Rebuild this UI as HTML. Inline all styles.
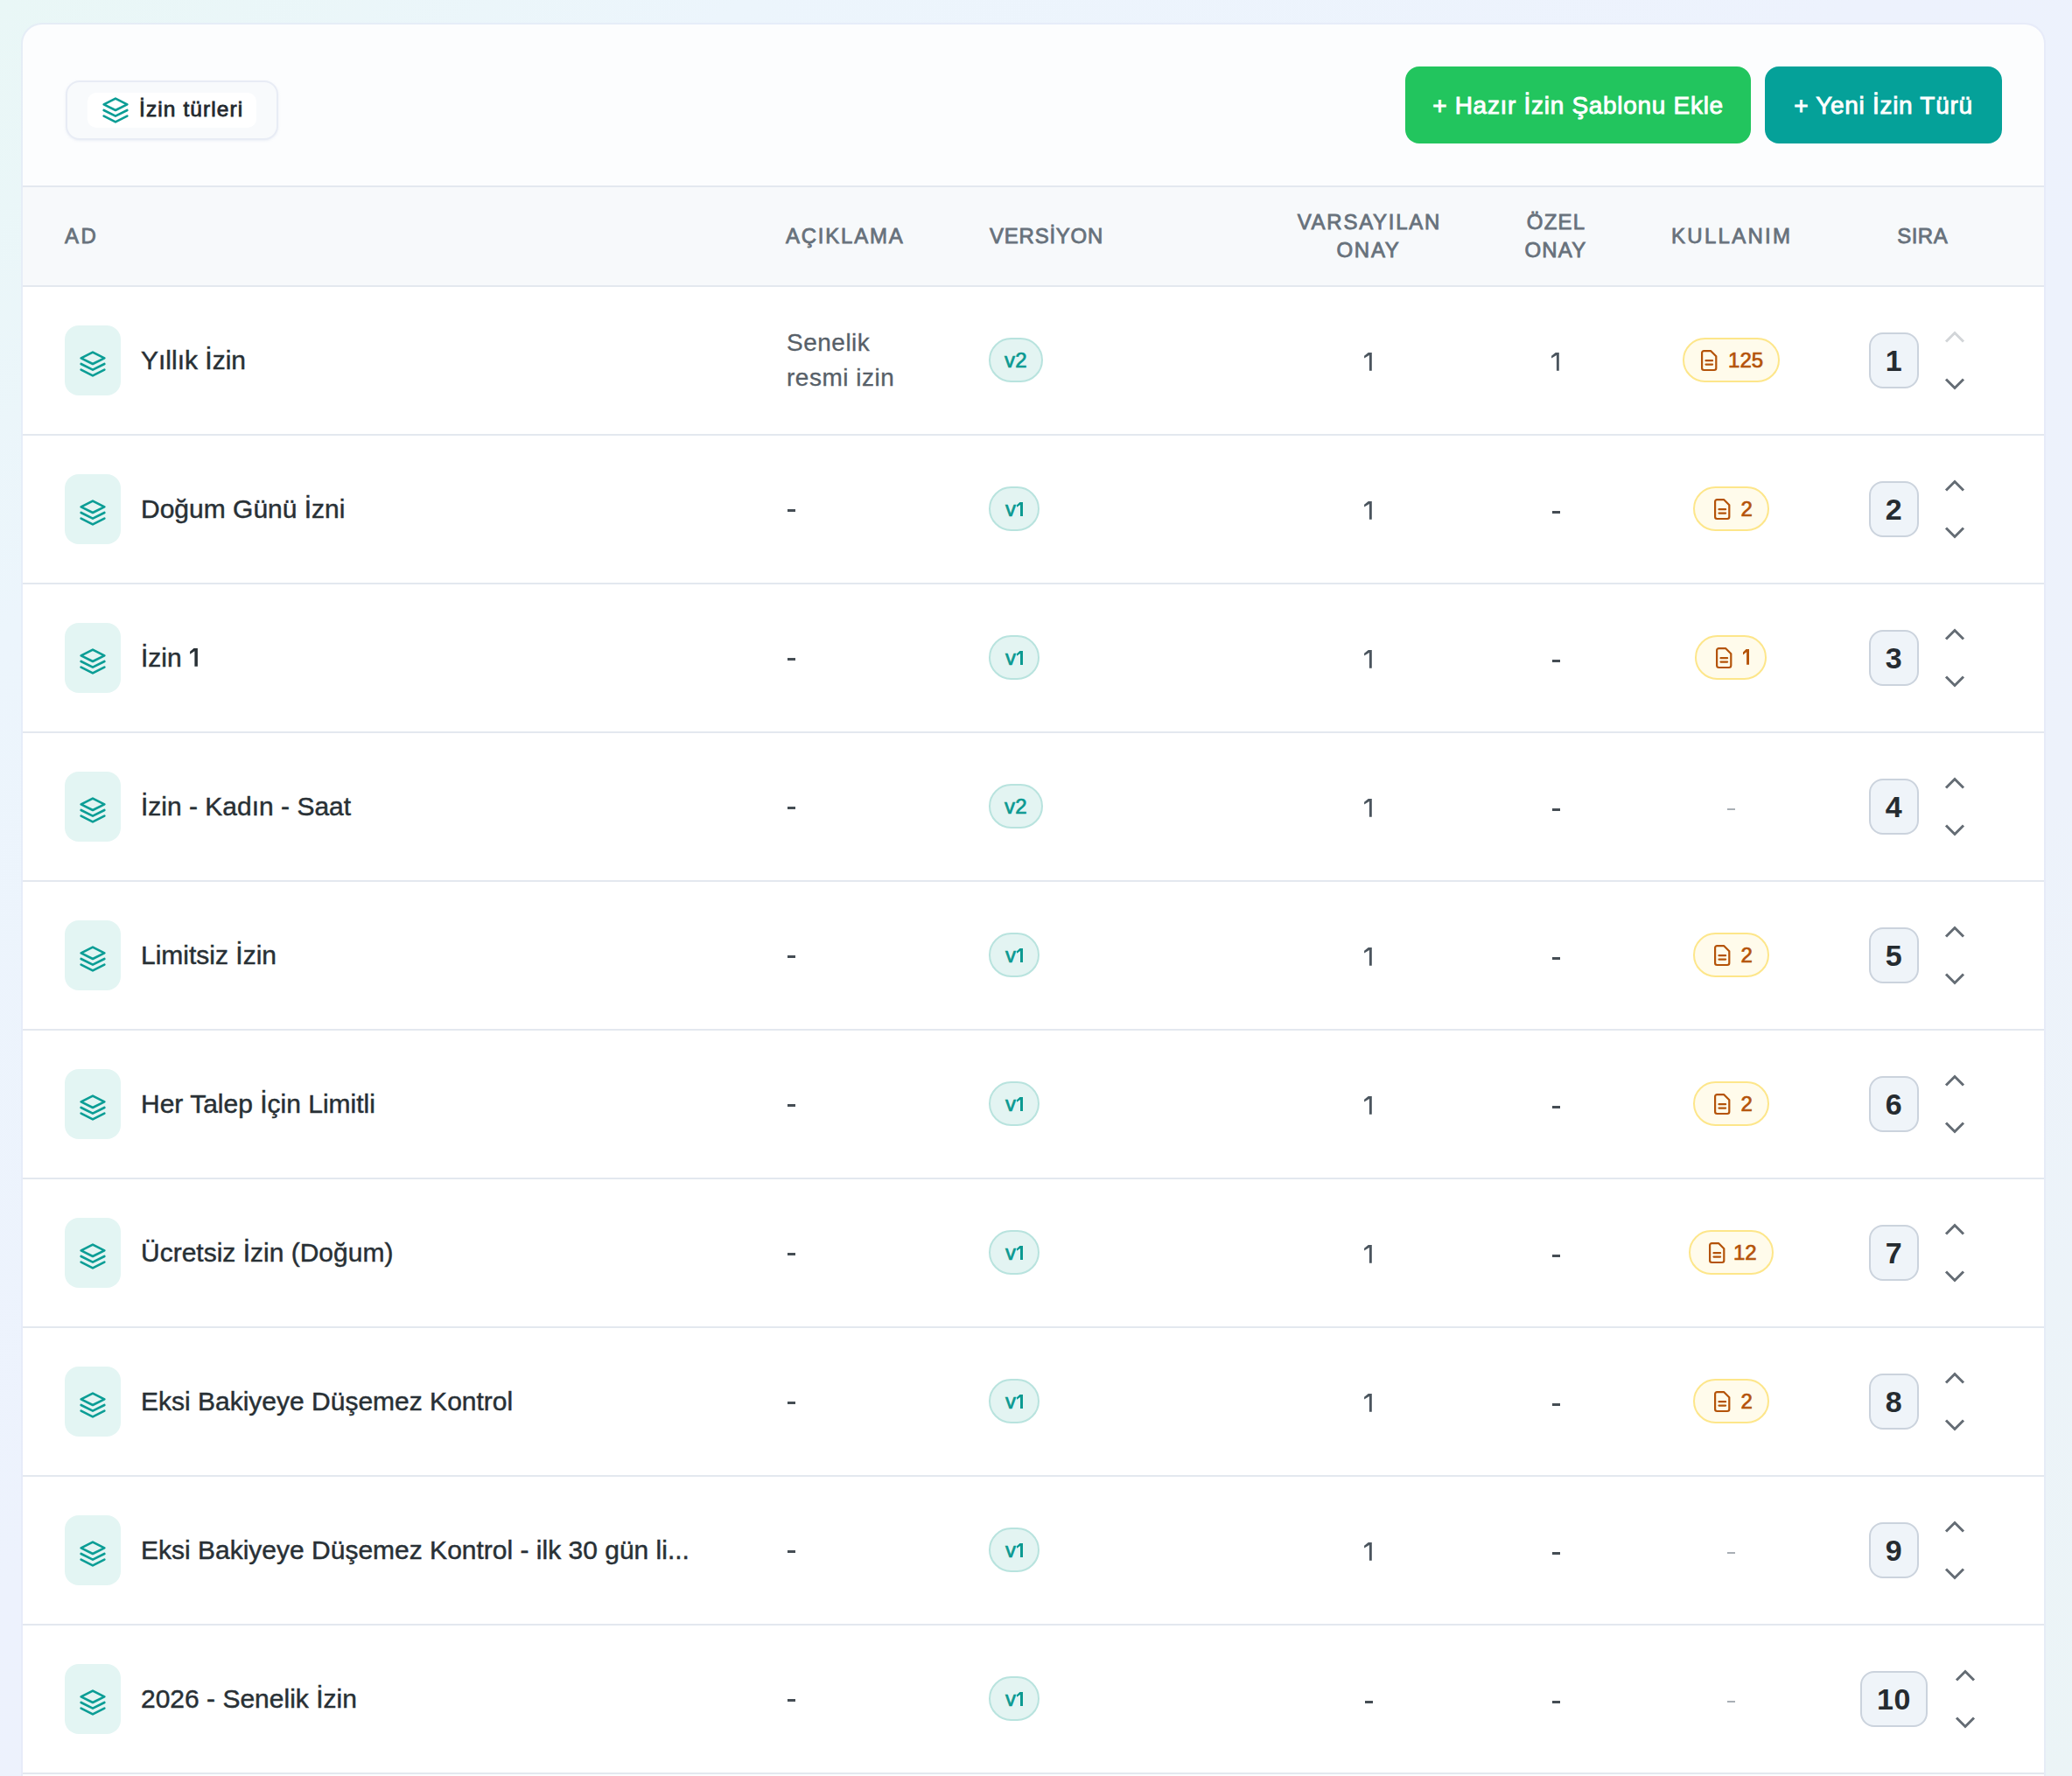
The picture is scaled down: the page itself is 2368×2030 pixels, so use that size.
<!DOCTYPE html><html lang="tr"><head><meta charset="utf-8"><title>İzin türleri</title><style>*{box-sizing:border-box;margin:0;padding:0}
html,body{width:2368px;height:2030px;overflow:hidden}
body{font-family:"Liberation Sans",sans-serif;background:linear-gradient(to bottom right,#e9f7f6 0%,#ecf5fc 18%,#edf2fd 45%,#edf2fb 72%,#ebf4f6 100%);position:relative}
.card{position:absolute;left:26px;top:28px;width:2310px;height:2100px;background:#fcfdfe;border-radius:22px;box-shadow:0 0 0 2px rgba(225,230,245,.55);overflow:hidden}
.top{position:absolute;left:0;top:0;width:100%;height:186px;border-bottom:2px solid #e3e8ef}
.pill{position:absolute;left:49px;top:64px;width:243px;height:68px;border-radius:16px;background:#f8fafc;border:2px solid #e8ecf5;box-shadow:0 1px 3px rgba(200,210,230,.3)}
.pin{position:absolute;left:23px;top:12px;width:193px;height:40px;border-radius:10px;background:#fff}
.pin .lay{position:absolute;left:15.5px;top:4px;width:32px;height:32px;color:#0b9d95}
.pin span{position:absolute;left:59px;top:7px;font-size:24.5px;font-weight:400;color:#23292e;-webkit-text-stroke:0.8px #23292e;letter-spacing:1.1px;white-space:nowrap;line-height:24px}
.btn{position:absolute;top:48px;height:88px;border-radius:16px;color:#fff;font-size:28px;font-weight:400;-webkit-text-stroke:0.9px #fff;letter-spacing:0.7px;line-height:89px;text-align:center;white-space:nowrap}
.btn.g{left:1580px;width:395px;background:#22c55e}
.btn.t{left:1991px;width:271px;background:#05a199}
.thead{position:absolute;left:0;top:186px;width:100%;height:114px;background:#f7f9fb;border-bottom:2px solid #e3e8ef}
.th{position:absolute;font-size:24px;font-weight:400;color:#67717b;-webkit-text-stroke:0.8px #67717b;letter-spacing:0.9px;line-height:32px;white-space:nowrap}
.th.ad{left:48px;top:40px;letter-spacing:2.6px}
.th.ac{left:872px;top:40px;letter-spacing:1.76px}
.th.ve{left:1105px;top:40px;letter-spacing:0.76px}
.th.va{left:1438px;width:200px;text-align:center;top:24px;letter-spacing:1.72px;text-indent:1.72px}
.th.oz{left:1652px;width:200px;text-align:center;top:24px;letter-spacing:1.2px;text-indent:1.2px}
.th.ku{left:1852px;width:200px;text-align:center;top:40px;letter-spacing:2.25px;text-indent:2.25px}
.th.si{left:2071px;width:200px;text-align:center;top:40px;letter-spacing:0.43px;text-indent:0.43px}
.row{position:absolute;left:0;width:100%;height:170px;background:#fff;border-bottom:2px solid #e3e8ef}
.row>div{position:absolute}
.ib{left:48px;top:44px;width:64px;height:80px;border-radius:16px;background:#e3f5f3}
.ib .lay{position:absolute;left:16px;top:28px;width:32px;height:32px;color:#0b9d95}
.nm{left:135px;top:65.5px;font-size:30px;line-height:36px;color:#283035;white-space:nowrap;-webkit-text-stroke:0.45px #283035}
.ds2{left:873px;top:44px;font-size:28px;line-height:40px;color:#576068;letter-spacing:0.5px;-webkit-text-stroke:0.3px #576068}
.dash{font-size:28px;line-height:36px;color:#454d54}
.dsd{left:873px;top:66px}
.vb{left:1104px;top:58px;height:51px;border-radius:26px;background:#e3f4f2;border:2px solid #b8e3de;color:#0a9991;font-size:24px;font-weight:400;-webkit-text-stroke:0.7px #0a9991;letter-spacing:0.4px;line-height:47px;text-align:center}
.vb.v2{width:62px}.vb.v1{width:58px}
.num{top:68px;width:100px;text-align:center;font-size:29px;line-height:36px;color:#4b555e}
.num.va{left:1489px}
.num.oz{left:1702px}
.num.ku{left:1902px}
.num.d{color:#454d54}
.num.lt{color:#a3a9ae}
.kb{top:58px;height:51px;border-radius:26px;background:#fffbeb;border:2px solid #fde68a;color:#b45309;font-size:24px;font-weight:400;-webkit-text-stroke:0.7px #b45309;line-height:47px;white-space:nowrap}
.kb .file{position:absolute;top:12px;width:20px;height:25px}
.kb span{position:absolute;top:0}
.kb.k125{left:1897.2px;width:110.4px}.kb.k125 .file{left:19.3px}.kb.k125 span{right:16.5px}
.kb.k12{left:1904.3px;width:96.6px}.kb.k12 .file{left:20.8px}.kb.k12 span{right:17.2px}
.kb.k2{left:1909.1px;width:86.8px}.kb.k2 .file{left:21.9px}.kb.k2 span{right:17px}
.kb.k1{left:1911.3px;width:81.3px}.kb.k1 .file{left:21.5px}.kb.k1 span{right:17px}
.ob{top:52px;height:64px;border-radius:16px;background:#eff4f9;border:2px solid #cbd3dd;color:#252b30;font-size:34px;font-weight:700;line-height:61px;text-align:center;letter-spacing:0.5px}
.ob.o1{left:2110px;width:57px}
.ob.o2{left:2100px;width:77px}
.chu,.chd{width:24px;height:14px;color:#646c74}
.chu svg,.chd svg{display:block;width:24px;height:14px}
.chu.o1,.chd.o1{left:2196px}
.chu.o2,.chd.o2{left:2208px}
.chu{top:50px}
.chd{top:104px}
.chu.dis{color:#d2d5d8}
.n1{top:75.1px;width:9px;height:21px;color:#4b555e}
.n1 svg{display:block}
svg.one{display:inline-block;vertical-align:baseline}
.dsh{width:9.2px;height:2.7px;background:#454d54}
.dsh.lt{background:#a9afb5}
</style></head><body>
<div class="page"><div class="card">
<div class="top"><div class="pill"><div class="pin"><svg class="lay" viewBox="0 0 24 24" fill="none" stroke="currentColor" stroke-width="2" stroke-linecap="round" stroke-linejoin="round"><polygon points="12 2 2 7 12 12 22 7 12 2"/><polyline points="2 17 12 22 22 17"/><polyline points="2 12 12 17 22 12"/></svg><span>İzin türleri</span></div></div>
<div class="btn g">+ Hazır İzin Şablonu Ekle</div><div class="btn t">+ Yeni İzin Türü</div></div>
<div class="thead"><div class="th ad">AD</div><div class="th ac">AÇIKLAMA</div><div class="th ve">VERSİYON</div><div class="th va">VARSAYILAN<br>ONAY</div><div class="th oz">ÖZEL<br>ONAY</div><div class="th ku">KULLANIM</div><div class="th si">SIRA</div></div>
<div class="row r0" style="top:300px">
<div class="ib"><svg class="lay" viewBox="0 0 24 24" fill="none" stroke="currentColor" stroke-width="2" stroke-linecap="round" stroke-linejoin="round"><polygon points="12 2 2 7 12 12 22 7 12 2"/><polyline points="2 17 12 22 22 17"/><polyline points="2 12 12 17 22 12"/></svg></div><div class="nm">Yıllık İzin</div>
<div class="ds2">Senelik<br>resmi izin</div>
<div class="vb v2">v2</div>
<div class="n1" style="left:1533.1px"><svg class="one" viewBox="0 0 42.4 100" preserveAspectRatio="none" style="width:8.8px;height:20.7px"><path fill="currentColor" d="M42.4 0V100H28.6V14L0.5 31.4V17.9L23 0Z"/></svg></div>
<div class="n1" style="left:1747.1px"><svg class="one" viewBox="0 0 42.4 100" preserveAspectRatio="none" style="width:8.8px;height:20.7px"><path fill="currentColor" d="M42.4 0V100H28.6V14L0.5 31.4V17.9L23 0Z"/></svg></div>
<div class="kb k125"><svg class="file" viewBox="0 0 20 25" fill="none" stroke="currentColor" stroke-width="2.2" stroke-linejoin="round" stroke-linecap="round"><path d="M1.1 3.4a2.2 2.2 0 0 1 2.2-2.2H11.3L17.3 7.3V20.8a2.2 2.2 0 0 1-2.2 2.2H3.3a2.2 2.2 0 0 1-2.2-2.2Z"/><path d="M5.5 12.2H13.1M5.5 16.6H13.1"/></svg><span>125</span></div>
<div class="ob o1">1</div>
<div class="chu dis o1"><svg viewBox="0 0 24 14" fill="none" stroke="currentColor" stroke-width="3" stroke-linecap="butt" stroke-linejoin="miter"><path d="M2 12.5 12 2.5 22 12.5"/></svg></div><div class="chd o1"><svg viewBox="0 0 24 14" fill="none" stroke="currentColor" stroke-width="3" stroke-linecap="butt" stroke-linejoin="miter"><path d="M2 1.5 12 11.5 22 1.5"/></svg></div>
</div>
<div class="row" style="top:470px">
<div class="ib"><svg class="lay" viewBox="0 0 24 24" fill="none" stroke="currentColor" stroke-width="2" stroke-linecap="round" stroke-linejoin="round"><polygon points="12 2 2 7 12 12 22 7 12 2"/><polyline points="2 17 12 22 22 17"/><polyline points="2 12 12 17 22 12"/></svg></div><div class="nm">Doğum Günü İzni</div>
<div class="dsh" style="left:874.1px;top:84px;width:8.7px"></div>
<div class="vb v1">v<svg class="one" viewBox="0 0 40.4 100" preserveAspectRatio="none" style="width:7.1px;height:16.3px;margin-left:0.3px"><path fill="currentColor" d="M40.4 0V100H23V18L0 36V20L20 0Z"/></svg></div>
<div class="n1" style="left:1533.1px"><svg class="one" viewBox="0 0 42.4 100" preserveAspectRatio="none" style="width:8.8px;height:20.7px"><path fill="currentColor" d="M42.4 0V100H28.6V14L0.5 31.4V17.9L23 0Z"/></svg></div>
<div class="dsh" style="left:1747.7px;top:85.9px"></div>
<div class="kb k2"><svg class="file" viewBox="0 0 20 25" fill="none" stroke="currentColor" stroke-width="2.2" stroke-linejoin="round" stroke-linecap="round"><path d="M1.1 3.4a2.2 2.2 0 0 1 2.2-2.2H11.3L17.3 7.3V20.8a2.2 2.2 0 0 1-2.2 2.2H3.3a2.2 2.2 0 0 1-2.2-2.2Z"/><path d="M5.5 12.2H13.1M5.5 16.6H13.1"/></svg><span>2</span></div>
<div class="ob o1">2</div>
<div class="chu o1"><svg viewBox="0 0 24 14" fill="none" stroke="currentColor" stroke-width="3" stroke-linecap="butt" stroke-linejoin="miter"><path d="M2 12.5 12 2.5 22 12.5"/></svg></div><div class="chd o1"><svg viewBox="0 0 24 14" fill="none" stroke="currentColor" stroke-width="3" stroke-linecap="butt" stroke-linejoin="miter"><path d="M2 1.5 12 11.5 22 1.5"/></svg></div>
</div>
<div class="row" style="top:640px">
<div class="ib"><svg class="lay" viewBox="0 0 24 24" fill="none" stroke="currentColor" stroke-width="2" stroke-linecap="round" stroke-linejoin="round"><polygon points="12 2 2 7 12 12 22 7 12 2"/><polyline points="2 17 12 22 22 17"/><polyline points="2 12 12 17 22 12"/></svg></div><div class="nm">İzin <svg class="one" viewBox="0 0 42.8 100" preserveAspectRatio="none" style="width:8.9px;height:20.8px;margin-left:1.2px"><path fill="currentColor" d="M42.8 0V100H26V16L0.5 32.2V17.8L21.5 0Z"/></svg></div>
<div class="dsh" style="left:874.1px;top:84px;width:8.7px"></div>
<div class="vb v1">v<svg class="one" viewBox="0 0 40.4 100" preserveAspectRatio="none" style="width:7.1px;height:16.3px;margin-left:0.3px"><path fill="currentColor" d="M40.4 0V100H23V18L0 36V20L20 0Z"/></svg></div>
<div class="n1" style="left:1533.1px"><svg class="one" viewBox="0 0 42.4 100" preserveAspectRatio="none" style="width:8.8px;height:20.7px"><path fill="currentColor" d="M42.4 0V100H28.6V14L0.5 31.4V17.9L23 0Z"/></svg></div>
<div class="dsh" style="left:1747.7px;top:85.9px"></div>
<div class="kb k1"><svg class="file" viewBox="0 0 20 25" fill="none" stroke="currentColor" stroke-width="2.2" stroke-linejoin="round" stroke-linecap="round"><path d="M1.1 3.4a2.2 2.2 0 0 1 2.2-2.2H11.3L17.3 7.3V20.8a2.2 2.2 0 0 1-2.2 2.2H3.3a2.2 2.2 0 0 1-2.2-2.2Z"/><path d="M5.5 12.2H13.1M5.5 16.6H13.1"/></svg><svg class="one" viewBox="0 0 40.4 100" preserveAspectRatio="none" style="position:absolute;left:52.5px;top:14px;width:7.2px;height:17.8px"><path fill="currentColor" d="M40.4 0V100H23V18L0 36V20L20 0Z"/></svg></div>
<div class="ob o1">3</div>
<div class="chu o1"><svg viewBox="0 0 24 14" fill="none" stroke="currentColor" stroke-width="3" stroke-linecap="butt" stroke-linejoin="miter"><path d="M2 12.5 12 2.5 22 12.5"/></svg></div><div class="chd o1"><svg viewBox="0 0 24 14" fill="none" stroke="currentColor" stroke-width="3" stroke-linecap="butt" stroke-linejoin="miter"><path d="M2 1.5 12 11.5 22 1.5"/></svg></div>
</div>
<div class="row" style="top:810px">
<div class="ib"><svg class="lay" viewBox="0 0 24 24" fill="none" stroke="currentColor" stroke-width="2" stroke-linecap="round" stroke-linejoin="round"><polygon points="12 2 2 7 12 12 22 7 12 2"/><polyline points="2 17 12 22 22 17"/><polyline points="2 12 12 17 22 12"/></svg></div><div class="nm">İzin - Kadın - Saat</div>
<div class="dsh" style="left:874.1px;top:84px;width:8.7px"></div>
<div class="vb v2">v2</div>
<div class="n1" style="left:1533.1px"><svg class="one" viewBox="0 0 42.4 100" preserveAspectRatio="none" style="width:8.8px;height:20.7px"><path fill="currentColor" d="M42.4 0V100H28.6V14L0.5 31.4V17.9L23 0Z"/></svg></div>
<div class="dsh" style="left:1747.7px;top:85.9px"></div>
<div class="dsh lt" style="left:1947.8px;top:85.6px"></div>
<div class="ob o1">4</div>
<div class="chu o1"><svg viewBox="0 0 24 14" fill="none" stroke="currentColor" stroke-width="3" stroke-linecap="butt" stroke-linejoin="miter"><path d="M2 12.5 12 2.5 22 12.5"/></svg></div><div class="chd o1"><svg viewBox="0 0 24 14" fill="none" stroke="currentColor" stroke-width="3" stroke-linecap="butt" stroke-linejoin="miter"><path d="M2 1.5 12 11.5 22 1.5"/></svg></div>
</div>
<div class="row" style="top:980px">
<div class="ib"><svg class="lay" viewBox="0 0 24 24" fill="none" stroke="currentColor" stroke-width="2" stroke-linecap="round" stroke-linejoin="round"><polygon points="12 2 2 7 12 12 22 7 12 2"/><polyline points="2 17 12 22 22 17"/><polyline points="2 12 12 17 22 12"/></svg></div><div class="nm">Limitsiz İzin</div>
<div class="dsh" style="left:874.1px;top:84px;width:8.7px"></div>
<div class="vb v1">v<svg class="one" viewBox="0 0 40.4 100" preserveAspectRatio="none" style="width:7.1px;height:16.3px;margin-left:0.3px"><path fill="currentColor" d="M40.4 0V100H23V18L0 36V20L20 0Z"/></svg></div>
<div class="n1" style="left:1533.1px"><svg class="one" viewBox="0 0 42.4 100" preserveAspectRatio="none" style="width:8.8px;height:20.7px"><path fill="currentColor" d="M42.4 0V100H28.6V14L0.5 31.4V17.9L23 0Z"/></svg></div>
<div class="dsh" style="left:1747.7px;top:85.9px"></div>
<div class="kb k2"><svg class="file" viewBox="0 0 20 25" fill="none" stroke="currentColor" stroke-width="2.2" stroke-linejoin="round" stroke-linecap="round"><path d="M1.1 3.4a2.2 2.2 0 0 1 2.2-2.2H11.3L17.3 7.3V20.8a2.2 2.2 0 0 1-2.2 2.2H3.3a2.2 2.2 0 0 1-2.2-2.2Z"/><path d="M5.5 12.2H13.1M5.5 16.6H13.1"/></svg><span>2</span></div>
<div class="ob o1">5</div>
<div class="chu o1"><svg viewBox="0 0 24 14" fill="none" stroke="currentColor" stroke-width="3" stroke-linecap="butt" stroke-linejoin="miter"><path d="M2 12.5 12 2.5 22 12.5"/></svg></div><div class="chd o1"><svg viewBox="0 0 24 14" fill="none" stroke="currentColor" stroke-width="3" stroke-linecap="butt" stroke-linejoin="miter"><path d="M2 1.5 12 11.5 22 1.5"/></svg></div>
</div>
<div class="row" style="top:1150px">
<div class="ib"><svg class="lay" viewBox="0 0 24 24" fill="none" stroke="currentColor" stroke-width="2" stroke-linecap="round" stroke-linejoin="round"><polygon points="12 2 2 7 12 12 22 7 12 2"/><polyline points="2 17 12 22 22 17"/><polyline points="2 12 12 17 22 12"/></svg></div><div class="nm">Her Talep İçin Limitli</div>
<div class="dsh" style="left:874.1px;top:84px;width:8.7px"></div>
<div class="vb v1">v<svg class="one" viewBox="0 0 40.4 100" preserveAspectRatio="none" style="width:7.1px;height:16.3px;margin-left:0.3px"><path fill="currentColor" d="M40.4 0V100H23V18L0 36V20L20 0Z"/></svg></div>
<div class="n1" style="left:1533.1px"><svg class="one" viewBox="0 0 42.4 100" preserveAspectRatio="none" style="width:8.8px;height:20.7px"><path fill="currentColor" d="M42.4 0V100H28.6V14L0.5 31.4V17.9L23 0Z"/></svg></div>
<div class="dsh" style="left:1747.7px;top:85.9px"></div>
<div class="kb k2"><svg class="file" viewBox="0 0 20 25" fill="none" stroke="currentColor" stroke-width="2.2" stroke-linejoin="round" stroke-linecap="round"><path d="M1.1 3.4a2.2 2.2 0 0 1 2.2-2.2H11.3L17.3 7.3V20.8a2.2 2.2 0 0 1-2.2 2.2H3.3a2.2 2.2 0 0 1-2.2-2.2Z"/><path d="M5.5 12.2H13.1M5.5 16.6H13.1"/></svg><span>2</span></div>
<div class="ob o1">6</div>
<div class="chu o1"><svg viewBox="0 0 24 14" fill="none" stroke="currentColor" stroke-width="3" stroke-linecap="butt" stroke-linejoin="miter"><path d="M2 12.5 12 2.5 22 12.5"/></svg></div><div class="chd o1"><svg viewBox="0 0 24 14" fill="none" stroke="currentColor" stroke-width="3" stroke-linecap="butt" stroke-linejoin="miter"><path d="M2 1.5 12 11.5 22 1.5"/></svg></div>
</div>
<div class="row" style="top:1320px">
<div class="ib"><svg class="lay" viewBox="0 0 24 24" fill="none" stroke="currentColor" stroke-width="2" stroke-linecap="round" stroke-linejoin="round"><polygon points="12 2 2 7 12 12 22 7 12 2"/><polyline points="2 17 12 22 22 17"/><polyline points="2 12 12 17 22 12"/></svg></div><div class="nm">Ücretsiz İzin (Doğum)</div>
<div class="dsh" style="left:874.1px;top:84px;width:8.7px"></div>
<div class="vb v1">v<svg class="one" viewBox="0 0 40.4 100" preserveAspectRatio="none" style="width:7.1px;height:16.3px;margin-left:0.3px"><path fill="currentColor" d="M40.4 0V100H23V18L0 36V20L20 0Z"/></svg></div>
<div class="n1" style="left:1533.1px"><svg class="one" viewBox="0 0 42.4 100" preserveAspectRatio="none" style="width:8.8px;height:20.7px"><path fill="currentColor" d="M42.4 0V100H28.6V14L0.5 31.4V17.9L23 0Z"/></svg></div>
<div class="dsh" style="left:1747.7px;top:85.9px"></div>
<div class="kb k12"><svg class="file" viewBox="0 0 20 25" fill="none" stroke="currentColor" stroke-width="2.2" stroke-linejoin="round" stroke-linecap="round"><path d="M1.1 3.4a2.2 2.2 0 0 1 2.2-2.2H11.3L17.3 7.3V20.8a2.2 2.2 0 0 1-2.2 2.2H3.3a2.2 2.2 0 0 1-2.2-2.2Z"/><path d="M5.5 12.2H13.1M5.5 16.6H13.1"/></svg><span>12</span></div>
<div class="ob o1">7</div>
<div class="chu o1"><svg viewBox="0 0 24 14" fill="none" stroke="currentColor" stroke-width="3" stroke-linecap="butt" stroke-linejoin="miter"><path d="M2 12.5 12 2.5 22 12.5"/></svg></div><div class="chd o1"><svg viewBox="0 0 24 14" fill="none" stroke="currentColor" stroke-width="3" stroke-linecap="butt" stroke-linejoin="miter"><path d="M2 1.5 12 11.5 22 1.5"/></svg></div>
</div>
<div class="row" style="top:1490px">
<div class="ib"><svg class="lay" viewBox="0 0 24 24" fill="none" stroke="currentColor" stroke-width="2" stroke-linecap="round" stroke-linejoin="round"><polygon points="12 2 2 7 12 12 22 7 12 2"/><polyline points="2 17 12 22 22 17"/><polyline points="2 12 12 17 22 12"/></svg></div><div class="nm">Eksi Bakiyeye Düşemez Kontrol</div>
<div class="dsh" style="left:874.1px;top:84px;width:8.7px"></div>
<div class="vb v1">v<svg class="one" viewBox="0 0 40.4 100" preserveAspectRatio="none" style="width:7.1px;height:16.3px;margin-left:0.3px"><path fill="currentColor" d="M40.4 0V100H23V18L0 36V20L20 0Z"/></svg></div>
<div class="n1" style="left:1533.1px"><svg class="one" viewBox="0 0 42.4 100" preserveAspectRatio="none" style="width:8.8px;height:20.7px"><path fill="currentColor" d="M42.4 0V100H28.6V14L0.5 31.4V17.9L23 0Z"/></svg></div>
<div class="dsh" style="left:1747.7px;top:85.9px"></div>
<div class="kb k2"><svg class="file" viewBox="0 0 20 25" fill="none" stroke="currentColor" stroke-width="2.2" stroke-linejoin="round" stroke-linecap="round"><path d="M1.1 3.4a2.2 2.2 0 0 1 2.2-2.2H11.3L17.3 7.3V20.8a2.2 2.2 0 0 1-2.2 2.2H3.3a2.2 2.2 0 0 1-2.2-2.2Z"/><path d="M5.5 12.2H13.1M5.5 16.6H13.1"/></svg><span>2</span></div>
<div class="ob o1">8</div>
<div class="chu o1"><svg viewBox="0 0 24 14" fill="none" stroke="currentColor" stroke-width="3" stroke-linecap="butt" stroke-linejoin="miter"><path d="M2 12.5 12 2.5 22 12.5"/></svg></div><div class="chd o1"><svg viewBox="0 0 24 14" fill="none" stroke="currentColor" stroke-width="3" stroke-linecap="butt" stroke-linejoin="miter"><path d="M2 1.5 12 11.5 22 1.5"/></svg></div>
</div>
<div class="row" style="top:1660px">
<div class="ib"><svg class="lay" viewBox="0 0 24 24" fill="none" stroke="currentColor" stroke-width="2" stroke-linecap="round" stroke-linejoin="round"><polygon points="12 2 2 7 12 12 22 7 12 2"/><polyline points="2 17 12 22 22 17"/><polyline points="2 12 12 17 22 12"/></svg></div><div class="nm">Eksi Bakiyeye Düşemez Kontrol - ilk 30 gün li...</div>
<div class="dsh" style="left:874.1px;top:84px;width:8.7px"></div>
<div class="vb v1">v<svg class="one" viewBox="0 0 40.4 100" preserveAspectRatio="none" style="width:7.1px;height:16.3px;margin-left:0.3px"><path fill="currentColor" d="M40.4 0V100H23V18L0 36V20L20 0Z"/></svg></div>
<div class="n1" style="left:1533.1px"><svg class="one" viewBox="0 0 42.4 100" preserveAspectRatio="none" style="width:8.8px;height:20.7px"><path fill="currentColor" d="M42.4 0V100H28.6V14L0.5 31.4V17.9L23 0Z"/></svg></div>
<div class="dsh" style="left:1747.7px;top:85.9px"></div>
<div class="dsh lt" style="left:1947.8px;top:85.6px"></div>
<div class="ob o1">9</div>
<div class="chu o1"><svg viewBox="0 0 24 14" fill="none" stroke="currentColor" stroke-width="3" stroke-linecap="butt" stroke-linejoin="miter"><path d="M2 12.5 12 2.5 22 12.5"/></svg></div><div class="chd o1"><svg viewBox="0 0 24 14" fill="none" stroke="currentColor" stroke-width="3" stroke-linecap="butt" stroke-linejoin="miter"><path d="M2 1.5 12 11.5 22 1.5"/></svg></div>
</div>
<div class="row rl" style="top:1830px">
<div class="ib"><svg class="lay" viewBox="0 0 24 24" fill="none" stroke="currentColor" stroke-width="2" stroke-linecap="round" stroke-linejoin="round"><polygon points="12 2 2 7 12 12 22 7 12 2"/><polyline points="2 17 12 22 22 17"/><polyline points="2 12 12 17 22 12"/></svg></div><div class="nm">2026 - Senelik İzin</div>
<div class="dsh" style="left:874.1px;top:84px;width:8.7px"></div>
<div class="vb v1">v<svg class="one" viewBox="0 0 40.4 100" preserveAspectRatio="none" style="width:7.1px;height:16.3px;margin-left:0.3px"><path fill="currentColor" d="M40.4 0V100H23V18L0 36V20L20 0Z"/></svg></div>
<div class="dsh" style="left:1534px;top:85.9px"></div>
<div class="dsh" style="left:1747.7px;top:85.9px"></div>
<div class="dsh lt" style="left:1947.8px;top:85.6px"></div>
<div class="ob o2">10</div>
<div class="chu o2"><svg viewBox="0 0 24 14" fill="none" stroke="currentColor" stroke-width="3" stroke-linecap="butt" stroke-linejoin="miter"><path d="M2 12.5 12 2.5 22 12.5"/></svg></div><div class="chd o2"><svg viewBox="0 0 24 14" fill="none" stroke="currentColor" stroke-width="3" stroke-linecap="butt" stroke-linejoin="miter"><path d="M2 1.5 12 11.5 22 1.5"/></svg></div>
</div>
</div></div></body></html>
